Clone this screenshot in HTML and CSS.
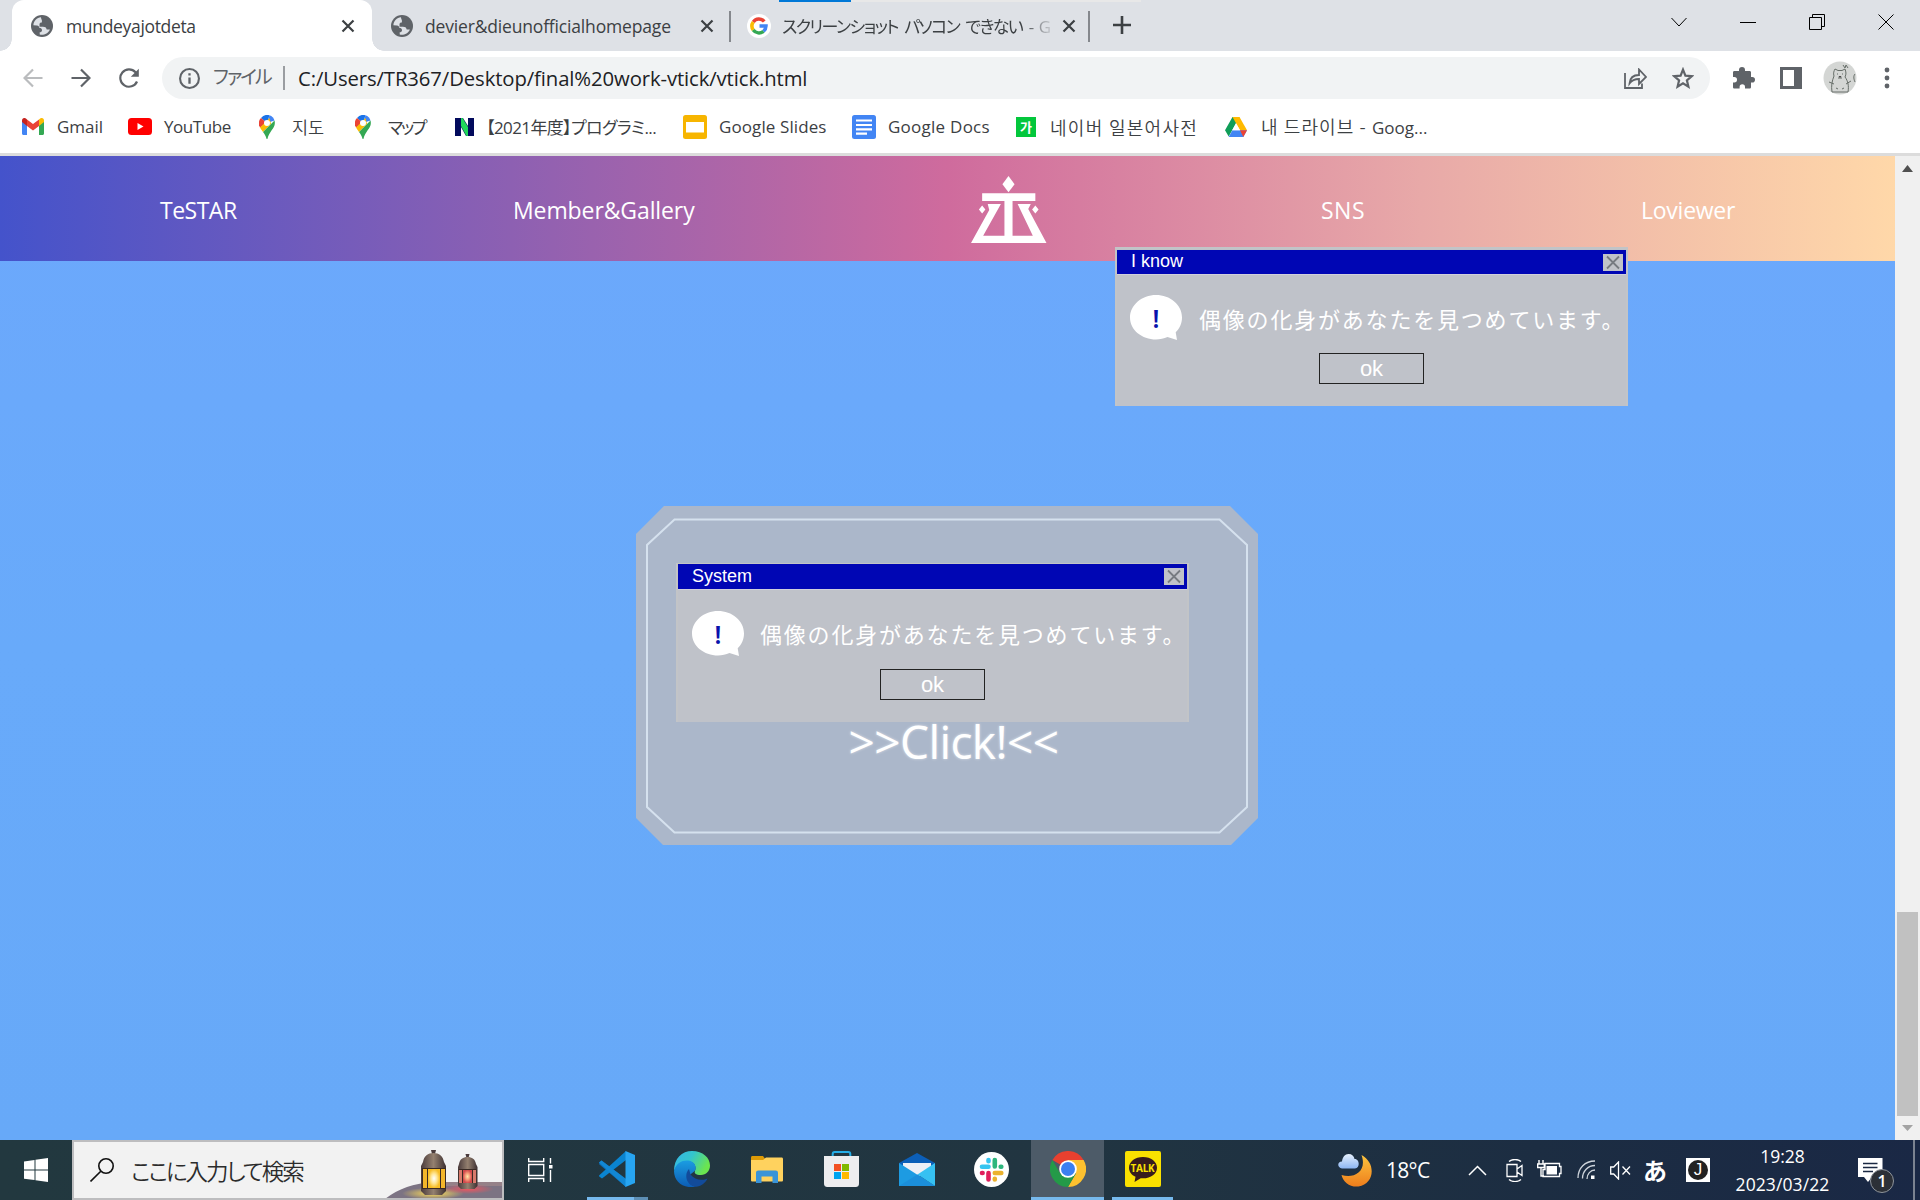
FILE: index.html
```html
<!DOCTYPE html>
<html lang="ja">
<head>
<meta charset="utf-8">
<title>mundeyajotdeta</title>
<link rel="stylesheet" href="styles.css">
</head>
<body>
<svg class="defs" width="0" height="0">
  <defs>
    <linearGradient id="moonG" x1="0" y1="0" x2="0" y2="1"><stop offset="0" stop-color="#fcc43e"/><stop offset="1" stop-color="#ee7d1c"/></linearGradient>
    <linearGradient id="cloudG" x1="0" y1="0" x2="0" y2="1"><stop offset="0" stop-color="#e6f0fd"/><stop offset="1" stop-color="#8db6f2"/></linearGradient>
    <linearGradient id="edgeA" x1="0" y1="0" x2="1" y2="0.4"><stop offset="0" stop-color="#35b5e8"/><stop offset="0.5" stop-color="#34c5cd"/><stop offset="1" stop-color="#6be54f"/></linearGradient>
    <linearGradient id="edgeB" x1="0" y1="0" x2="0" y2="1"><stop offset="0" stop-color="#1b9de2"/><stop offset="1" stop-color="#0c5cb4"/></linearGradient>
    <linearGradient id="metal" x1="0" y1="0" x2="1" y2="0"><stop offset="0" stop-color="#4a3b3c"/><stop offset="0.5" stop-color="#94806f"/><stop offset="1" stop-color="#3d3032"/></linearGradient>
    <radialGradient id="glowY"><stop offset="0" stop-color="#fff"/><stop offset="0.5" stop-color="#ffe79a"/><stop offset="1" stop-color="#f7bd25"/></radialGradient>
    <radialGradient id="glowR"><stop offset="0" stop-color="#ffe9ac"/><stop offset="0.5" stop-color="#f59a78"/><stop offset="1" stop-color="#d24a4d"/></radialGradient>
    <radialGradient id="poolY"><stop offset="0" stop-color="#ffdf57"/><stop offset="1" stop-color="#ffdf57" stop-opacity="0"/></radialGradient>
    <radialGradient id="poolR"><stop offset="0" stop-color="#f0555f"/><stop offset="1" stop-color="#f0555f" stop-opacity="0"/></radialGradient>
    <symbol id="globe" viewBox="0 0 22 22"><circle cx="11" cy="11" r="11" fill="#5f6368"/><path d="M10 2.300c-4 .3-7.500 3.900-7.600 8l3.600.2c1.400 0 2.200 1 2.200 2.200 1.800.2 2.800 1 2.800 2.600 0 1.400-1.200 2-2.300 2v2.200c3.500 1.200 8.500-.9 10.200-5l-3.200-.1c-.4-2-1.500-2.700-3.800-2.700H8.500V9.300c0-1.300.8-1.900 2.400-1.900V5.600c0-1.200-.9-1.500-.9-3.300z" fill="#dee1e6"/></symbol>
    <symbol id="x" viewBox="0 0 14 14"><path d="M1.500 1.500l11 11M12.500 1.500l-11 11" stroke="#3c4043" stroke-width="2.200" fill="none"/></symbol>
    <symbol id="pin" viewBox="0 0 16 24"><path d="M2 3a8 8 0 0 1 8.500-2.700L8 8z" fill="#1a73e8"/><path d="M10.500.3A8 8 0 0 1 15.500 5.500L8 8z" fill="#4285f4"/><path d="M2 3 8 8 1 12.500A8 8 0 0 1 2 3z" fill="#ea4335"/><path d="M1 12.500 10.500 3 12 9 4 17C3 15.500 1.800 14.200 1 12.500z" fill="#fbbc04"/><path d="M15.500 5.500C17.500 13 10.500 15 8.400 24H7.600C7 21 5.500 19 4 17z" fill="#34a853"/><circle cx="8" cy="8" r="3" fill="#fff"/></symbol>
    <symbol id="bubble" viewBox="0 0 52 45"><path d="M26 0C40 0 52 9.500 52 22.500c0 6-2.400 11-6.300 14.800L47 45l-9.500-3C34 43.500 30 44.500 26 44.500 12 44.500 0 35 0 22.500S12 0 26 0z" fill="#fff"/></symbol>
  </defs>
</svg>

<header class="browser">
  <div class="tabs">
    <div class="tab active">
      <svg class="fav"><use href="#globe"/></svg>
      <span class="tab-title t1">mundeyajotdeta</span>
      <svg class="close"><use href="#x"/></svg>
    </div>
    <div class="tab">
      <svg class="fav"><use href="#globe"/></svg>
      <span class="tab-title t2">devier&amp;dieunofficialhomepage</span>
      <svg class="close"><use href="#x"/></svg>
    </div>
    <div class="tab third">
      <svg class="fav" viewBox="0 0 48 48"><circle cx="24" cy="24" r="24" fill="#fff"/><g fill="none" stroke-width="7"><path d="M34.500 15A13.800 13.800 0 0 0 12.500 16" stroke="#ea4335"/><path d="M12.500 16a14 14 0 0 0 0 16" stroke="#fbbc05"/><path d="M12.500 32a14 14 0 0 0 20.500 2.500" stroke="#34a853"/><path d="M33 34.500A14 14 0 0 0 38 24H25" stroke="#4285f4"/></g></svg>
      <span class="tab-title t3">スクリーンショット パソコン できない - G</span>
      <svg class="close"><use href="#x"/></svg>
    </div>
    <svg class="plus" viewBox="0 0 18 18"><path d="M9 0v18M0 9h18" stroke="#3c4043" stroke-width="2.600"/></svg>
    <div class="capture"></div>
    <div class="controls">
      <svg viewBox="0 0 16 16"><path d="M.5 4l7.500 8 7.500-8"/></svg>
      <svg viewBox="0 0 16 16"><path d="M0 8.500h16"/></svg>
      <svg viewBox="0 0 16 16"><path d="M3.500 3.500v-3h12v12h-3M.5 3.500h12v12H.5z"/></svg>
      <svg viewBox="0 0 16 16"><path d="M.5.5l15 15M15.500.5l-15 15"/></svg>
    </div>
  </div>

  <div class="toolbar">
    <svg class="nav-ic" viewBox="0 0 20 20"><path d="M19.500 10H2M10 1.500 1.500 10l8.500 8.500" stroke="#babcbe"/></svg>
    <svg class="nav-ic" viewBox="0 0 20 20"><path d="M.5 10H18M10 1.500l8.500 8.500-8.500 8.500" stroke="#5f6368"/></svg>
    <svg class="nav-ic" viewBox="0 0 20 20"><path d="M18 13.500A8.700 8.700 0 1 1 16.500 4.200L18 6" stroke="#5f6368"/><path d="M19.800.8v8h-8z" fill="#5f6368"/></svg>
    <div class="omnibox">
      <svg class="info" viewBox="0 0 20 20"><circle cx="10" cy="10" r="9" fill="none" stroke="#5f6368" stroke-width="2"/><path d="M10 9v6M10 5v2.200" stroke="#5f6368" stroke-width="2.200"/></svg>
      <span class="scheme">ファイル</span>
      <span class="url">C:/Users/TR367/Desktop/final%20work-vtick/vtick.html</span>
      <svg class="share" viewBox="0 0 23 21"><path d="M1 5v15h17v-4.500M5.500 15.500C6 9.500 9.500 7 15 7V1.500l7 7.500-7 7v-5c-4.500 0-7 1-9.500 4.500z" fill="none" stroke="#5f6368" stroke-width="1.800"/></svg>
      <svg class="star" viewBox="0 0 22 22"><path d="M11 2.600l2.400 6 6.400.5-4.900 4.200 1.500 6.300L11 16.200l-5.400 3.400 1.500-6.300-4.900-4.200 6.400-.5z" fill="none" stroke="#5f6368" stroke-width="2.200"/></svg>
    </div>
    <svg class="ext" viewBox="0 0 23 22"><path d="M2.500 4H7V3a3 3 0 0 1 6 0v1h4.500c1 0 1.500.6 1.500 1.500V10h1.200a2.800 2.800 0 0 1 0 5.600H19V20c0 1-.6 1.600-1.600 1.600H13V20a2.700 2.700 0 0 0-5.400 0v1.600H2.600C1.600 21.600 1 21 1 20v-4.500h1.300a2.700 2.700 0 0 0 0-5.400H1V5.500C1 4.500 1.500 4 2.500 4z" fill="#5f6368"/></svg>
    <svg class="panel-ic" viewBox="0 0 22 22"><path d="M0 0h22v22H0zM3 3v16h11V3z" fill="#5f6368" fill-rule="evenodd"/></svg>
    <svg class="avatar" viewBox="0 0 34 34"><circle cx="17" cy="17" r="16.500" fill="#d4d6d4"/><path d="M11 15c-1-3 0-5 1-7l3 1.500h4L22 8c1 3 1.500 5 0 8 3 4 4 9 3 15H9c-1-6 0-11 2-16zM6 21l5 2M28 20l-5 3M14 13h1M19 13h1M15 17h4M13 27l2 1M21 27l-2 1M20 4l2 3 1-3 2 3M32 13c-2 2-1 6 0 8" fill="none" stroke="#666d68" stroke-width="1"/><path d="M15.500 15h3l-1.500 2z" fill="#444"/></svg>
    <svg class="dots" viewBox="0 0 6 22"><g fill="#5f6368"><circle cx="3" cy="3" r="2.400"/><circle cx="3" cy="11" r="2.400"/><circle cx="3" cy="19" r="2.400"/></g></svg>
  </div>

  <nav class="bookmarks">
    <a><svg width="22" height="17" viewBox="0 0 22 17"><path d="M0 3v12.500c0 .8.6 1.500 1.500 1.500H5V7z" fill="#4285f4"/><path d="M22 3v12.500c0 .8-.6 1.500-1.500 1.500H17V7z" fill="#34a853"/><path d="M17 1.500V8l5-4V2.500C22 .2 19.500-.8 17.800.7z" fill="#fbbc04"/><path d="M5 8V1.500L11 6l6-4.500V8l-6 4.500z" fill="#ea4335"/><path d="M0 2.500V4l5 4V1.500L4.200.7C2.500-.8 0 .2 0 2.500z" fill="#c5221f"/></svg><span class="b1">Gmail</span></a>
    <a><svg width="24" height="17" viewBox="0 0 24 17"><rect width="24" height="17" rx="3.500" fill="#f00"/><path d="M9.500 5v7l6-3.500z" fill="#fff"/></svg><span class="b2">YouTube</span></a>
    <a><svg width="16" height="24"><use href="#pin"/></svg><span class="b3">지도</span></a>
    <a><svg width="16" height="24"><use href="#pin"/></svg><span class="b4">マップ</span></a>
    <a><svg width="19" height="18" viewBox="0 0 19 18"><path d="M0 0h19v18H0z" fill="#020a5c"/><path d="M6 0h1.500L13 9v9h-1.500L6 8z" fill="#20d65a"/><path d="M6 9l5 9H6zM8 0h5v8z" fill="#fff"/></svg><span class="b5">【2021年度】プログラミ...</span></a>
    <a><svg width="24" height="24" viewBox="0 0 24 24"><rect width="24" height="24" rx="2.500" fill="#f7b500"/><path d="M3 7h18v10.500H3z" fill="#fff"/></svg><span class="b6">Google Slides</span></a>
    <a><svg width="24" height="24" viewBox="0 0 24 24"><rect width="24" height="24" rx="2.500" fill="#4285f4"/><path d="M4 5.500h16M4 10h16M4 14.300h16M4 18.700h11" stroke="#fff" stroke-width="2.200"/></svg><span class="b7">Google Docs</span></a>
    <a><span class="naver">가</span><span class="b8">네이버 일본어사전</span></a>
    <a><svg width="22" height="20" viewBox="0 0 22 20"><path d="M7.500 0h7L11 6.200 3.700 19.500 0 13.300z" fill="#0f9d58"/><path d="M7.500 0h7L22 13.300h-7z" fill="#ffba00"/><path d="M7.300 13.300H22L18.300 20H3.700z" fill="#4285f4"/><path d="M15 13.300h7L18.300 20z" fill="#ea4335"/><path d="M11 6.200l4 7.100H7.200z" fill="#fff"/></svg><span class="b9">내 드라이브 - <span class="latin">Goog...</span></span></a>
  </nav>
</header>

<main class="viewport">
  <div class="page">
    <nav class="site-nav">
      <a class="n1">TeSTAR</a>
      <a class="n2">Member&amp;Gallery</a>
      <svg class="logo" viewBox="0 0 75 66"><g fill="#fff"><path d="M37 0l6 8-6 8-6-8z"/><path d="M11 17h52.500v7.500H41V59h20L46 27.500h13l-2.500 5L74.500 66H0l18-32.500-1.500-6H29.500L12 59h21V24.500H11z"/><path d="M11 29l3.200 4-3.200 4-3.200-4zM63.500 29l3.200 4-3.200 4-3.200-4z"/></g></svg>
      <a class="n3">SNS</a>
      <a class="n4">Loviewer</a>
    </nav>
    <section class="stage">
      <div class="card">
        <svg class="card-bg" viewBox="0 0 622 339"><path d="M28 0h566l28 28v284l-27 27H27L0 312V28z" fill="#abb7ca"/><path d="M38.500 13.500h545l27.500 25.500v262l-27.500 25.500h-545L11 301V39z" fill="none" stroke="#d5e1ee" stroke-width="2"/></svg>
        <span class="click">&gt;&gt;Click!&lt;&lt;</span>
      </div>
    </section>
    <div class="dialog know">
      <div class="bar"><span>I know</span><svg viewBox="0 0 20 17"><rect width="20" height="17" fill="#c1c3c8"/><path d="M4 2.500l12 12M16 2.500l-12 12" stroke="#777b80" stroke-width="1.800"/></svg></div>
      <div class="msg"><div class="mark"><svg><use href="#bubble"/></svg><b>!</b></div><p>偶像の化身があなたを見つめています。</p></div>
      <button>ok</button>
    </div>
    <div class="dialog system">
      <div class="bar"><span>System</span><svg viewBox="0 0 20 17"><rect width="20" height="17" fill="#c1c3c8"/><path d="M4 2.500l12 12M16 2.500l-12 12" stroke="#777b80" stroke-width="1.800"/></svg></div>
      <div class="msg"><div class="mark"><svg><use href="#bubble"/></svg><b>!</b></div><p>偶像の化身があなたを見つめています。</p></div>
      <button>ok</button>
    </div>
  </div>
  <div class="scroll">
    <svg width="11" height="7" viewBox="0 0 11 7"><path d="M5.500 0 11 7H0z" fill="#505050"/></svg>
    <div class="thumb"></div>
    <svg width="11" height="6" viewBox="0 0 11 6"><path d="M0 0h11L5.500 6z" fill="#a3a3a3"/></svg>
  </div>
</main>

<footer class="taskbar">
  <div class="start"><svg width="24" height="24" viewBox="0 0 24 24"><path d="M0 3.400l10.500-1.500v9.600H0zM11.500 1.700 24 0v11.500H11.500zM0 12.500h10.500v9.600L0 20.700zM11.500 12.500H24V24l-12.500-1.700z" fill="#fff"/></svg></div>
  <div class="search">
    <svg class="glass" viewBox="0 0 24 24"><circle cx="16" cy="8" r="7.200" fill="none" stroke="#111" stroke-width="1.600"/><path d="M10.800 13.200.5 23.500" stroke="#111" stroke-width="1.600"/></svg>
    <span>ここに入力して検索</span>
    <svg class="lanterns" viewBox="0 0 120 60">
      <path d="M0 60C12 49 30 44 46 42h74v18z" fill="#7c7383"/><path d="M60 42h60v4H60z" fill="#a78b8c" opacity=".6"/>
      <ellipse cx="49" cy="53.500" rx="31" ry="6" fill="url(#poolY)"/><ellipse cx="84" cy="49" rx="26" ry="5" fill="url(#poolR)"/>
      <g><path d="M47 10h5l-1 4h-3z" fill="#4a3b3c"/><path d="M39 22c1-6 5-9 10.500-9S59 16 60 22l2 4v25l-4 4H41l-4-4V26z" fill="url(#metal)"/><path d="M38 28h24v21H38z" fill="#3a2a24"/><path d="M39 29h4v19h-4zM57 29h4v19h-4z" fill="#f3b62a"/><path d="M44 29h12v19H44z" fill="url(#glowY)"/></g>
      <g><path d="M81.500 14h4l-1 4h-2z" fill="#4a3b3c"/><path d="M75 24c1-5 4-7 8.500-7s7.500 2 8.500 7l1.500 3v19l-3 3H77l-3-3V27z" fill="url(#metal)"/><path d="M74.500 29h18v14h-18z" fill="#3a2a24"/><path d="M75 30h3v13h-3zM89 30h3v13h-3z" fill="#d87a6c"/><path d="M79 30h9v13h-9z" fill="url(#glowR)"/></g>
    </svg>
  </div>
  <div class="apps">
    <div class="app view"><svg width="25" height="24" viewBox="0 0 25 24"><path d="M.7 0v3.500h15V0M.7 6.500h15v11h-15zM.7 24v-3.500h15V24M22.500 0v5.500M22.500 12v12" fill="none" stroke="#fff" stroke-width="1.400"/><path d="M21 7h3.500v3.500H21z" fill="#fff"/></svg></div>
    <div class="app open multi"><svg width="36" height="36" viewBox="0 0 36 36"><path d="M0 11.500 2.500 9.500 27 28v8L.5 13.500z" fill="#0b6eb8"/><path d="M0 24.500 27 0v9L3 27.500.2 25.500z" fill="#0a84d0"/><path d="M0 11.500 2.500 9.500 27 28v8z" fill="#1287d4"/><path d="M26.500 0 36 4v28l-9.500 4z" fill="#27a5f2"/></svg></div>
    <div class="app"><svg width="36" height="36" viewBox="0 0 36 36"><path d="M0 20C0 7 8 0 18 0c11 0 18 7 18 14.500 0 5.500-4 9.500-9 9.500-5.500 0-7-2-6-4 1.500-4 0-8-5-9.500C9 9 3 13 0 20z" fill="url(#edgeA)"/><path d="M0 20C2 12 8 9 14 9.500c5 .5 8.500 4 7.500 9-1.500 4-9.500 5-7 11 1.500 4 5 6 8 6C10 38.500 0 31 0 20z" fill="url(#edgeB)"/><path d="M15 18c-5 5-3 15 5 17.500 6 1 11-3 13.500-8-5 2.500-13 1.500-17-4z" fill="#124b9a"/></svg></div>
    <div class="app"><svg width="32" height="27" viewBox="0 0 32 27"><path d="M0 1.500C0 .6.500 0 1.500 0H12l3 4H0z" fill="#dd9a06"/><path d="M0 4h12l3-2.500h15.500c1 0 1.500.6 1.500 1.500v21c0 1-.5 1.500-1.500 1.500h-29C.5 25.500 0 25 0 24z" fill="#ffd25e"/><path d="M5 27V17c0-1.700.8-2.500 2.500-2.500h17c1.700 0 2.500.8 2.500 2.500v10h-5.500v-6.500h-11V27z" fill="#3a94d8"/></svg></div>
    <div class="app"><svg width="35" height="36" viewBox="0 0 35 36"><path d="M8.700 7V3c0-1.500.5-2 2-2h13.600c1.500 0 2 .5 2 2v4" fill="none" stroke="#25aee8" stroke-width="2"/><path d="M0 5h35v27c0 3-1 4-4 4H4c-3 0-4-1-4-4z" fill="#ededef"/><path d="M10 13h7v7h-7z" fill="#f25022"/><path d="M18 13h7v7h-7z" fill="#7fba00"/><path d="M10 21h7v7h-7z" fill="#00a4ef"/><path d="M18 21h7v7h-7z" fill="#ffb900"/></svg></div>
    <div class="app"><svg width="36" height="33" viewBox="0 0 36 33"><path d="M0 10 18 0l18 10v8H0z" fill="#0c5fb8"/><path d="M4 10h28v8L18 24 4 16z" fill="#eef0f6"/><path d="M0 10l36 23H0z" fill="#1d9be2"/><path d="M36 10v23L18.500 21.500z" fill="#36c1f2"/><path d="M0 33 18.500 21.500 36 33z" fill="#1b8fdb"/></svg></div>
    <div class="app"><svg width="35" height="35" viewBox="0 0 35 35"><circle cx="17.500" cy="17.500" r="17.500" fill="#fff"/><g fill="none" stroke-width="4.600" stroke-linecap="round"><path d="M14.500 8v1.200M8 14.800h6.500" stroke="#36c5f0"/><path d="M20.800 8v6.500M27.300 14.800h-.6" stroke="#2eb67d"/><path d="M27.300 21h-6.500M20.800 27.500v-.8" stroke="#ecb22e"/><path d="M14.500 27.500V21M8 21h.6" stroke="#e01e5a"/></g></svg></div>
    <div class="app current"><svg width="36" height="36" viewBox="0 0 36 36"><path d="M18 18 2.400 9A18 18 0 0 1 33.600 9z" fill="#e8402f"/><path d="M18 18V9h15.600A18 18 0 0 1 18 36l7.800-13.500z" fill="#fdc12f"/><path d="M2.400 9A18 18 0 0 0 18 36l7.800-13.500L10.200 22.500z" fill="#249a48"/><circle cx="18" cy="18" r="8.800" fill="#fff"/><circle cx="18" cy="18" r="7" fill="#3b7ff0"/></svg></div>
    <div class="app open"><div class="kakao"><svg viewBox="0 0 36 36"><path d="M18 6c8 0 14 4.600 14 10.700S26 27.300 18 27.300l-2.300-.1L9.500 31l1-5.300C6.500 24 4 20.700 4 16.700 4 10.600 10 6 18 6z" fill="#371c1d"/></svg><span>TALK</span></div></div>
  </div>
  <div class="tray">
    <svg width="35" height="34" viewBox="0 0 35 34"><path d="M23.500 2c15 8 13 29-3 31.500C12 34.500 5 29 3.500 22c12 4 26-3 20-20z" fill="url(#moonG)"/><path d="M4 15.500c-5-1-5-7 0-7C4.500 4 7 1 10.500 1S16 3 16.500 6c5-.5 6 9 .5 9.500z" fill="url(#cloudG)"/></svg>
    <span class="temp">18°C</span>
    <svg width="19" height="11" viewBox="0 0 19 11"><path d="M1 10l8.500-8.500L18 10" fill="none" stroke="#fff" stroke-width="1.500"/></svg>
    <svg width="18" height="23" viewBox="0 0 18 23"><path d="M1 5.500h10v12H1zM11 10l5-3.500v10L11 13M3 2.500C6-.2 12-.2 15 2.500M3 20.500c3 2.700 9 2.700 12 0" fill="none" stroke="#fff" stroke-width="1.300"/></svg>
    <svg width="25" height="21" viewBox="0 0 25 21"><path d="M2 0v4M6 0v4M.7 4h6.600v3.500H.7zM4 7.500V16h3" fill="none" stroke="#fff" stroke-width="1.400"/><path d="M8 3.500h14.500v3H24v7h-1.500v3H6v-7h2z" fill="none" stroke="#fff" stroke-width="1.300"/><path d="M9.500 6H20v8.500H9.500z" fill="#fff"/></svg>
    <svg width="19" height="20" viewBox="0 0 19 20"><path d="M1 18C1 8 8 1 18 1M5.500 18.500C5.500 11 11 5.500 18 5.500M10 19c0-5 3.500-9 8-9" fill="none" stroke="#cfd5dc" stroke-width="1.300"/><path d="M14 15.500h3.500V19H14z" fill="#fff"/></svg>
    <svg width="21" height="19" viewBox="0 0 21 19"><path d="M.7 6h3L8.500 1v17l-4.800-5h-3zM12.500 5.500l7.500 8M20 5.500l-7.500 8" fill="none" stroke="#fff" stroke-width="1.300"/></svg>
    <span class="ime">あ</span>
    <span class="jbox"><i>J</i></span>
    <div class="clock"><span class="time">19:28</span><span class="date">2023/03/22</span></div>
    <div class="notice"><svg width="25" height="25" viewBox="0 0 25 25"><path d="M0 0h24.500v19H14l-4 5-4-5H0z" fill="#fff"/><path d="M5 5.500h14.500M5 9.500h14.500M5 13.500h10" stroke="#1b2943" stroke-width="1.400"/></svg><span>1</span></div>
    <div class="peek"></div>
  </div>
</footer>
</body>
</html>
```
FILE: styles.css
```css
* { box-sizing: border-box; }
body {
  margin: 0; width: 1920px; height: 1200px; overflow: hidden;
  display: flex; flex-direction: column;
  font-family: "Open Sans", "Noto Sans CJK JP", sans-serif;
  color: #3c4043;
}
svg { display: block; flex: none; }
.defs { position: absolute; }
span, a { white-space: nowrap; }

/* browser chrome */
.browser { height: 156px; background: #fff; border-bottom: 3px solid #dcdcdc; flex: none; }
.tabs { height: 51px; background: #dee1e6; display: flex; position: relative; padding-left: 12px; }
.tab { height: 51px; width: 359px; display: grid; grid-template-columns: 22px 1fr 14px; column-gap: 12px; align-items: center; padding: 0 17px 0 19px; font-size: 17.5px; }
.tab.active { column-gap: 13px; background: #fff; border-radius: 12px 12px 0 0; width: 360px; position: relative; }
.tab.active::before, .tab.active::after { content: ""; position: absolute; bottom: 0; width: 12px; height: 12px; }
.tab.active::before { left: -12px; background: radial-gradient(circle at 0 0, transparent 11.5px, #fff 12px); }
.tab.active::after { right: -12px; background: radial-gradient(circle at 100% 0, transparent 11.5px, #fff 12px); }
.tab.third { font-size: 17px; padding-left: 16px; padding-right: 16px; border: solid #85888d; border-width: 0 2px; border-image: linear-gradient(transparent 12px, #85888d 12px, #85888d 41px, transparent 41px) 1; width: 361px; margin-left: -2px; }
.third .fav { width: 24px; height: 24px; }
.fav { width: 22px; height: 22px; }
.close { width: 14px; height: 14px; }
.t1 { letter-spacing: -0.33px; }
.t2 { letter-spacing: -0.17px; }
.t3 { padding-left: 1px; font-feature-settings: "palt"; letter-spacing: -1.6px; word-spacing: 3.5px; mask-image: linear-gradient(90deg, #000 240px, transparent 275px); }
.plus { width: 18px; height: 18px; margin: 16px 0 0 23px; }
.capture { position: absolute; left: 779px; top: 0; width: 362px; height: 2px; background: linear-gradient(90deg, #0078d7 72px, #e8e8e8 72px); }
.controls { margin-left: auto; padding: 14px 26px 0 0; display: flex; gap: 53px; }
.controls svg { width: 16px; height: 16px; fill: none; stroke: #000; stroke-width: 1; }

.toolbar { height: 54px; display: flex; align-items: center; padding-left: 23px; }
.nav-ic { width: 20px; height: 20px; margin-right: 28px; fill: none; stroke-width: 2.2; }
.nav-ic + .nav-ic + .nav-ic { margin-right: 23px; }
.omnibox { width: 1548px; height: 42px; border-radius: 21px; background: #f1f3f4; display: grid; grid-template-columns: 34px 72px 1fr 48px 22px; align-items: center; padding: 0 16px 0 17px; }
.info { width: 21px; height: 21px; }
.scheme { font-size: 19px; color: #5f6368; font-feature-settings: "palt"; letter-spacing: -2px; border-right: 2px solid #9a9da1; height: 24px; line-height: 23px; }
.url { font-size: 20.3px; color: #202124; letter-spacing: -0.1px; padding-left: 13px; }
.share { width: 23px; height: 21px; }
.star { width: 22px; height: 22px; }
.ext { width: 23px; height: 22px; margin-left: 22px; }
.panel-ic { width: 22px; height: 22px; margin-left: 25px; }
.avatar { width: 34px; height: 34px; margin-left: 21px; }
.dots { width: 6px; height: 22px; margin-left: 27px; }

.bookmarks { height: 43px; display: grid; grid-template-columns: 106px 131px 96px 100px 228px 169px 164px 209px 220px; padding-left: 22px; font-size: 17px; }
.bookmarks a { display: flex; align-items: center; gap: 12px; }
.bookmarks a:nth-child(3), .bookmarks a:nth-child(4) { gap: 17px; }
.naver { width: 20px; height: 20px; background: #03c73c; color: #fff; font: 700 13px/20px "Noto Sans CJK KR", sans-serif; text-align: center; }
.b1 { padding-left: 1px; }
.b2 { letter-spacing: -0.45px; }
.b6 { letter-spacing: 0.1px; }
.b7 { letter-spacing: 0.25px; }
.b3, .b8, .b9 { font-family: "Noto Sans CJK KR", sans-serif; font-size: 18px; font-weight: 350; line-height: 24px; }
.b3 { font-size: 17.5px; }
.b8 { margin-left: 2px; letter-spacing: 1.3px; }
.b9 { margin-left: 2px; letter-spacing: 1.1px; }
.latin { font: 400 17px/24px "Open Sans", sans-serif; letter-spacing: 0; }
.b4, .b5 { font-feature-settings: "palt"; letter-spacing: -0.6px; }
.b4 { letter-spacing: -2.4px; }

/* page */
.viewport { height: 984px; display: flex; flex: none; }
.page { width: 1895px; position: relative; background: linear-gradient(#6ca8fc, #68aafa 50%, #67a9f8); color: #fff; }
.site-nav { height: 105px; background: linear-gradient(90deg, #4453cb, #8d60b2 27%, #cf6b9d 50%, #e8a9a8 75%, #ffd8a9); display: grid; grid-template-columns: 353px 458px 350px 320px 1fr; align-items: center; padding-left: 160px; font-size: 23px; padding-top: 3px; }
.n1 { letter-spacing: -0.5px; }
.n2 { letter-spacing: -0.1px; }
.n3 { letter-spacing: 0.5px; }
.n4 { letter-spacing: -0.25px; }
.logo { width: 76px; height: 67px; margin-bottom: 2px; }
.stage { display: flex; justify-content: center; padding: 245px 2px 0 0; }
.card { width: 622px; height: 339px; display: grid; place-items: center; }
.card > * { grid-area: 1 / 1; }
.card-bg { width: 622px; height: 339px; }
.click { font-size: 46px; line-height: 60px; padding: 133px 0 0 14px; letter-spacing: -0.6px; text-shadow: 0 0 3px rgba(255,255,255,.6); align-self: start; margin-top: 72px; }

.dialog { position: absolute; width: 513px; height: 159px; background: #bfc2c9; border: 2px solid #c2c4c7; border-bottom: 0; }
.know { left: 1115px; top: 91px; }
.system { left: 676px; top: 407px; }
.bar { height: 24px; margin-top: 1px; background: #0006b4; display: flex; align-items: center; justify-content: space-between; padding: 0 3px 0 14px; font: 18px "Liberation Sans", Arial, sans-serif; box-shadow: 0 1px 0 #d0d0dc; }
.know .bar span { padding-bottom: 2px; }
.system .bar { margin-top: -1px; height: 25px; margin-bottom: 1px; }
.bar svg { width: 20px; height: 17px; }
.msg { display: flex; padding: 21px 0 0 13px; height: 67px; }
.system .msg { padding-left: 14px; }
.mark { width: 52px; height: 45px; display: grid; place-items: center; }
.mark > * { grid-area: 1 / 1; }
.mark svg { width: 52px; height: 45px; }
.mark b { color: #0a12ac; font: 600 25px "Noto Sans", sans-serif; }
.msg p { margin: 6px 0 0 17px; font: 400 22px/34px "Noto Sans CJK JP", sans-serif; letter-spacing: 1.8px; white-space: nowrap; }
.system .msg p { margin: 5px 0 0 16px; }
.dialog button { display: block; width: 105px; height: 31px; margin: 12px auto 0; background: none; border: 1px solid #222; color: #fff; font: 22px/28px "Liberation Sans", Arial, sans-serif; padding: 0; }

.scroll { width: 25px; background: #f0f0f0; display: flex; flex-direction: column; align-items: center; padding-top: 9px; }
.thumb { width: 21px; height: 204px; background: #c1c1c1; margin: 740px 0 9px; }

/* taskbar */
.taskbar { height: 60px; background: linear-gradient(90deg, #22383f, #213541 55%, #1c2d42 80%, #1a2845); display: flex; color: #fff; flex: none; }
.start { width: 72px; display: grid; place-items: center; }
.search { width: 432px; background: #f2f2f2; border: 2px solid #bdbdbf; display: flex; align-items: center; color: #2b2b2b; overflow: hidden; }
.glass { width: 24px; height: 24px; margin: 0 17px 0 16px; }
.search span { font-size: 22.5px; font-weight: 350; font-feature-settings: "palt"; letter-spacing: -2px; width: 253px; flex: none; }
.lanterns { width: 120px; height: 60px; }
.apps { display: flex; width: 834px; padding-left: 1px; }
.app { width: 75px; display: grid; place-items: center; padding: 1px 0 3px; flex: none; background: bottom / 100% 3px no-repeat; }
.app.view { width: 70px; }
.app.view svg { margin-top: 2px; }
.app.open { background-image: linear-gradient(90deg, transparent 7px, #76b9ed 7px, #76b9ed 68px, transparent 68px); }
.app.multi { background-image: linear-gradient(90deg, transparent 12px, #76b9ed 12px, #76b9ed 59px, #5d8fb5 59px, #5d8fb5 73px, transparent 73px); padding-left: 9px; }
.apps .app:nth-child(n+3) { padding-left: 8px; }
.app.current { width: 73px; background-color: #4d5b68; background-image: linear-gradient(#76b9ed, #76b9ed); margin: 0 1px 0 6px; }
.apps .app.current { padding-left: 0; }
.apps .app:last-child { padding-left: 0; }
.kakao { width: 36px; height: 36px; background: #fae100; border-radius: 2px; display: grid; place-items: center; }
.kakao > * { grid-area: 1 / 1; }
.kakao svg { width: 36px; height: 36px; }
.kakao span { font: 700 10px "Open Sans", sans-serif; letter-spacing: -0.3px; color: #fae100; margin-bottom: 3px; }
.tray { display: grid; grid-template-columns: 48px 82px 38px 31px 40px 33px 33px 43px 42px 130px 55px 2px; align-items: center; }
.temp { font-size: 21px; letter-spacing: -0.7px; }
.ime { font: 700 24px/30px "Noto Sans CJK JP", sans-serif; }
.jbox { width: 24px; height: 24px; background: #fff; display: grid; place-items: center; }
.jbox i { width: 20px; height: 20px; border-radius: 50%; background: #222; font: 400 17px/20px "Liberation Sans", Arial, sans-serif; text-align: center; }
.clock { display: grid; justify-items: center; width: 107px; margin-left: 1px; font-size: 17.5px; line-height: 28px; }
.date { letter-spacing: 0.1px; }
.notice { position: relative; }
.notice span { position: absolute; left: 12px; top: 11px; width: 24px; height: 24px; border-radius: 50%; border: 1px solid #8f959c; background: #2c3037; font: 600 16px/22px "Open Sans", sans-serif; text-align: center; }
.peek { width: 2px; height: 60px; background: #7b8391; }
```
